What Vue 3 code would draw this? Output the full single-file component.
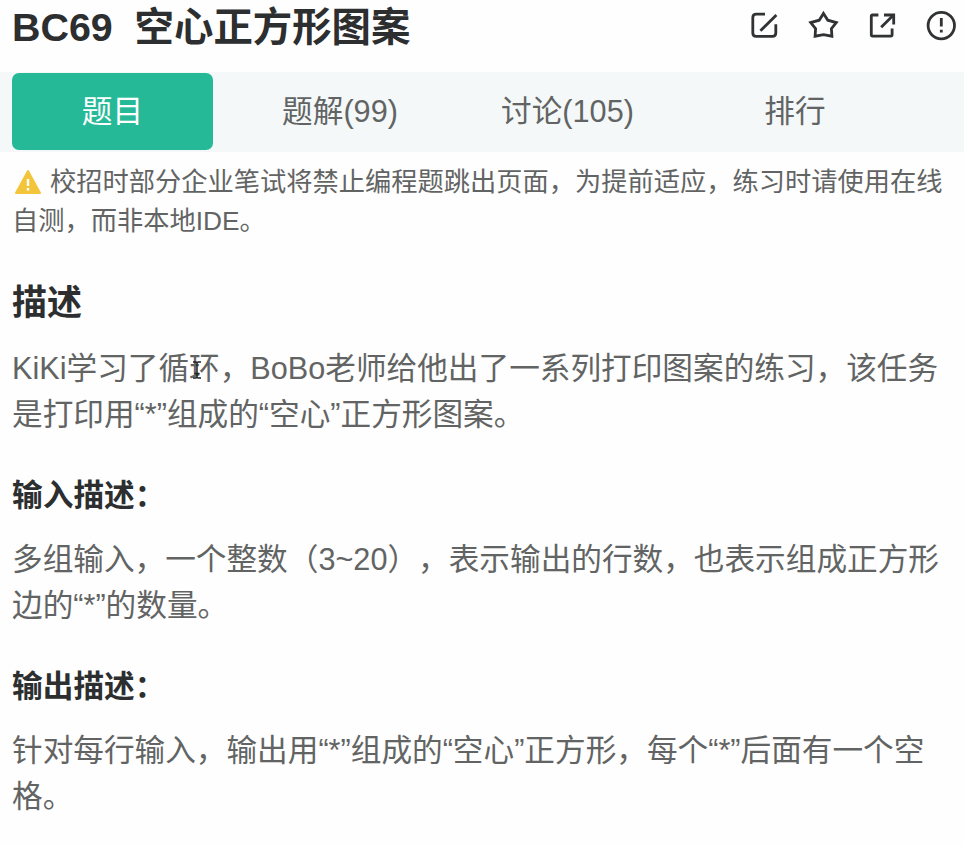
<script setup>
import { ref } from 'vue'

const activeTab = ref(0)
const tabs = ['题目', '题解(99)', '讨论(105)', '排行']
</script>

<template>
  <main class="problem">
    <header class="header">
      <h1 class="title">BC69&nbsp; 空心正方形图案</h1>
      <div class="actions">
        <svg class="icon" viewBox="0 0 32 32">
          <path d="M17 4.2H8.2Q4.8 4.2 4.8 7.6V23Q4.8 26.4 8.2 26.4H24.4Q27.8 26.4 27.8 23V14.2" />
          <path d="M12.4 20.8L28.4 5" />
        </svg>
        <svg class="icon" viewBox="0 0 32 32">
          <path d="M16.5 3.4L20.8 10.2L29.3 12.6L24.4 18.6L24.9 26.2L16.5 24.6L8.1 26.2L8.6 18.6L3.7 12.6L12.2 10.2Z" />
        </svg>
        <svg class="icon" viewBox="0 0 32 32">
          <path d="M12.4 5H6.6Q5.3 5 5.3 6.3V24.8Q5.3 26.1 6.6 26.1H24.8Q26.1 26.1 26.1 24.8V18.6" />
          <path d="M18 5H27.7V14.4" />
          <path d="M27 5.6L15.2 17.2" />
        </svg>
        <svg class="icon" viewBox="0 0 32 32">
          <circle cx="16.3" cy="15.6" r="13.2" />
          <path d="M16.3 8V16.6M16.3 19.8V22.6" />
        </svg>
      </div>
    </header>

    <nav class="tabs">
      <button
        v-for="(tab, index) in tabs"
        :key="tab"
        class="tab"
        :class="{ active: activeTab === index }"
        @click="activeTab = index"
      >{{ tab }}</button>
    </nav>

    <p class="notice">
      <svg class="warning" viewBox="0 0 28 26">
        <path class="warning-shape" d="M14 2L26 24H2Z" />
        <path class="warning-mark" d="M14 10V17M14 19V21.4" />
      </svg>校招时部分企业笔试将禁止编程题跳出页面，为提前适应，练习时请使用在线<br>自测，而非本地IDE。
    </p>

    <section class="section">
      <h2 class="heading">描述</h2>
      <p class="text">
        KiKi学习了循<span class="hovered">环<svg class="cursor" viewBox="0 0 12 20">
          <path d="M2 2H5L6 3L7 2H10M6 3V17M2 18H5L6 17L7 18H10M3.5 13.5H8.5" />
        </svg></span>，BoBo老师给他出了一系列打印图案的练习，该任务<br>是打印用“*”组成的“空心”正方形图案。
      </p>
    </section>

    <section class="section">
      <h3 class="subheading">输入描述：</h3>
      <p class="text">多组输入，一个整数（3~20），表示输出的行数，也表示组成正方形<br>边的“*”的数量。</p>
    </section>

    <section class="section">
      <h3 class="subheading">输出描述：</h3>
      <p class="text">针对每行输入，输出用“*”组成的“空心”正方形，每个“*”后面有一个空<br>格。</p>
    </section>
  </main>
</template>

<style>
body {
  background: #fefefe;
}
</style>

<style scoped>
.problem {
  box-sizing: border-box;
  width: 964px;
  height: 846px;
  overflow: hidden;
  color: #626464;
  font-family: "Liberation Sans", "Noto Sans CJK SC", sans-serif;
  font-size: 30.65px;
  text-spacing-trim: space-all;
  white-space: nowrap;
}

h1,
h2,
h3,
p {
  margin: 0;
}

.header {
  display: flex;
  justify-content: space-between;
  height: 72px;
  padding: 0 7px 0 12px;
}

.title {
  color: #2c2e2f;
  font-size: 39.4px;
  line-height: 54px;
}

.actions {
  display: flex;
  gap: 27px;
  padding-top: 10px;
}

.icon {
  width: 32px;
  height: 32px;
  fill: none;
  stroke: #303233;
  stroke-width: 2.8;
}

.tabs {
  display: flex;
  gap: 26.5px;
  box-sizing: border-box;
  height: 80px;
  padding: 1px 0 2px 12px;
  background: #f4f8f8;
}

.tab {
  flex: none;
  width: 201px;
  padding: 0 0 7px;
  border: 0;
  border-radius: 7px;
  background: none;
  color: inherit;
  font: inherit;
  cursor: pointer;
}

.tab.active {
  background: #25b997;
  color: #fff;
}

.notice {
  padding: 11px 12px 0;
  font-size: 26.25px;
  line-height: 39px;
}

.warning {
  width: 28px;
  height: 26px;
  margin: 0 8px 0 2px;
  vertical-align: -4px;
}

.warning-shape {
  fill: #f3c53b;
  stroke: #f3c53b;
  stroke-width: 2;
  stroke-linejoin: round;
}

.warning-mark {
  stroke: #fff;
  stroke-width: 2.4;
}

.section {
  padding: 0 12px;
}

.heading {
  padding-top: 38px;
  color: #2c2e2f;
  font-size: 35px;
  line-height: 48px;
}

.subheading {
  padding-top: 36px;
  color: #2c2e2f;
  font-size: 30.7px;
  line-height: 46px;
}

.text {
  padding-top: 17px;
  line-height: 46px;
}

.heading + .text {
  padding-top: 18px;
}

.hovered {
  position: relative;
}

/* I 型光标 */
.cursor {
  position: absolute;
  top: 9px;
  left: 2px;
  width: 12px;
  height: 20px;
  fill: none;
  stroke: #222;
  stroke-width: 1.5;
}
</style>
